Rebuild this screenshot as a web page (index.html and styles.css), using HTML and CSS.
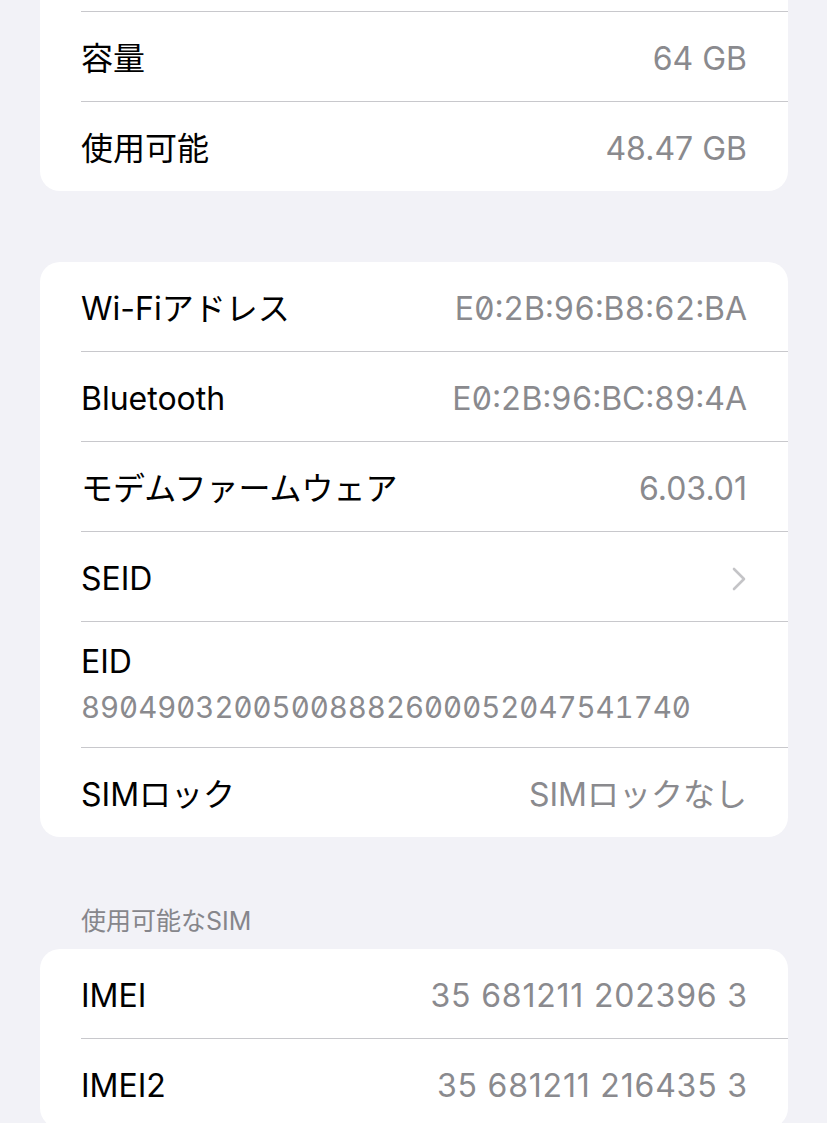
FILE: index.html
```html
<!DOCTYPE html>
<html lang="ja">
<head>
    <meta charset="utf-8">
    <title>情報</title>
    <link rel="stylesheet" href="styles.css">
</head>
<body>
    <div class="group group-first">
        <div class="row"></div>
        <div class="row">
            <span class="label">容量</span>
            <span class="value">64 GB</span>
        </div>
        <div class="row">
            <span class="label">使用可能</span>
            <span class="value">48.47 GB</span>
        </div>
    </div>

    <div class="group">
        <div class="row">
            <span class="label">Wi-Fiアドレス</span>
            <span class="value mono">E0:2B:96:B8:62:BA</span>
        </div>
        <div class="row">
            <span class="label">Bluetooth</span>
            <span class="value mono">E0:2B:96:BC:89:4A</span>
        </div>
        <div class="row">
            <span class="label">モデムファームウェア</span>
            <span class="value">6.03.01</span>
        </div>
        <div class="row">
            <span class="label">SEID</span>
            <svg class="chevron" width="14" height="24" viewBox="0 0 14 24">
                <path d="M2 2 L12 12 L2 22" fill="none" stroke="#c4c4c7" stroke-width="2.6" stroke-linecap="round" stroke-linejoin="round"/>
            </svg>
        </div>
        <div class="row row-stacked">
            <div class="label">EID</div>
            <div class="sub mono">89049032005008882600052047541740</div>
        </div>
        <div class="row">
            <span class="label">SIMロック</span>
            <span class="value">SIMロックなし</span>
        </div>
    </div>

    <div class="group-header">使用可能なSIM</div>
    <div class="group group-after-header">
        <div class="row">
            <span class="label">IMEI</span>
            <span class="value imei">35 681211 202396 3</span>
        </div>
        <div class="row">
            <span class="label">IMEI2</span>
            <span class="value imei">35 681211 216435 3</span>
        </div>
    </div>
</body>
</html>
```

FILE: styles.css
```css
body {
    margin: 0;
    background: #f2f2f7;
    font-family: Inter, "Noto Sans CJK JP", sans-serif;
    font-size: 32px;
    color: #000;
    overflow: hidden;
}

.group {
    background: white;
    border-radius: 20px;
    margin: 71px 39px 0 40px;
    padding-left: 41px;
}

.group-first {
    margin-top: -78px;
}

.group-after-header {
    margin-top: 0;
}

.row {
    display: flex;
    align-items: center;
    justify-content: space-between;
    height: 85px;
    padding: 4px 41px 0 0;
    border-top: 1px solid #c8c8cc;
}

.row:first-child {
    border-top: none;
}

.label {
    line-height: 36px;
}

.value {
    color: #8a8a8e;
    line-height: 36px;
}

.mono {
    font-feature-settings: "tnum", "zero";
}

.imei {
    letter-spacing: 0.8px;
    margin-right: -0.8px;
}

.chevron {
    margin-right: 1px;
}

.row-stacked {
    display: block;
    height: auto;
    padding-top: 22px;
    padding-bottom: 21px;
}

.sub {
    color: #8a8a8e;
    font-size: 29.4px;
    line-height: 36px;
    margin-top: 10px;
}

.group-header {
    margin: 66px 40px 10px 40px;
    padding-left: 41px;
    line-height: 36px;
    font-size: 25px;
    color: #86868b;
}
```
